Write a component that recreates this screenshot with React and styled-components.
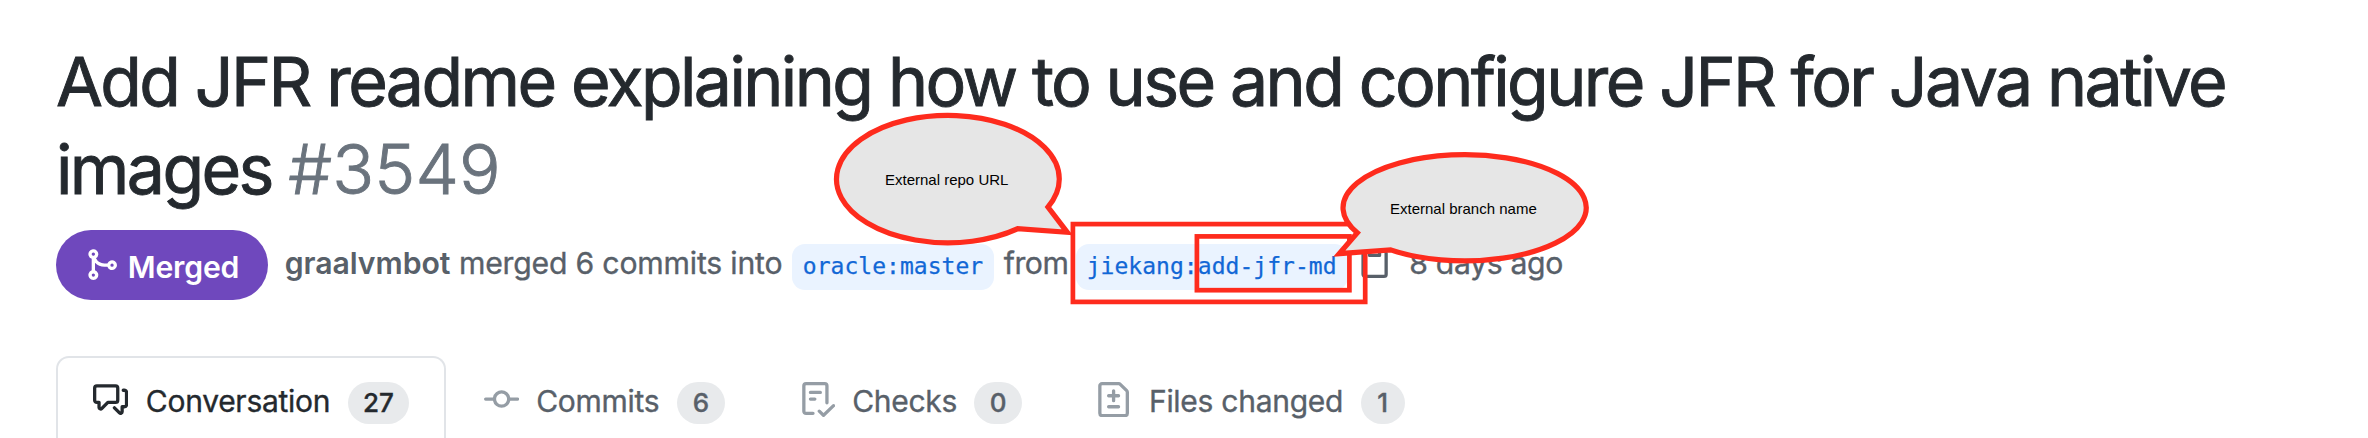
import React from "react";
import styled, { createGlobalStyle } from "styled-components";

const GlobalStyle = createGlobalStyle`
  *, *::before, *::after { box-sizing: border-box; }
  body {
    margin: 0;
    background: #ffffff;
    font-family: Inter, "Liberation Sans", sans-serif;
    color: #24292e;
    overflow: hidden;
  }
`;

const Page = styled.main`
  position: relative;
  display: flex;
  flex-direction: column;
  height: 438px;
  padding: 37px 56px 0;
  overflow: hidden;
`;

const Title = styled.h1`
  margin: 0;
  font-size: 68px;
  font-weight: 400;
  line-height: 88px;
  letter-spacing: -2.61px;
  -webkit-text-stroke: 0.9px currentColor;
`;

const Number = styled.span`
  color: #6a737d;
  font-size: 69.2px;
  font-weight: 300;
  letter-spacing: 0.1px;
  line-height: 1;
`;

const Meta = styled.div`
  display: flex;
  align-items: flex-start;
  flex: none;
  height: 70px;
  margin-top: 17px;
  color: #586069;
  font-size: 30.2px;
  line-height: 66px;
  letter-spacing: -0.2px;
  white-space: nowrap;
`;

const State = styled.span`
  display: flex;
  align-items: center;
  width: 212px;
  height: 70px;
  margin-right: 16.7px;
  padding: 0 28px;
  border-radius: 35px;
  background: #6f48bd;
  color: #ffffff;
  font-weight: 600;
  line-height: 38px;
`;

const StateLabel = styled.span`
  margin: 4px 0 0 8.6px;
`;

const Author = styled.strong`
  margin-right: 8.6px;
  font-weight: 600;
  letter-spacing: -0.05px;
`;

const Phrase = styled.span`
  margin-right: ${(p) => p.$after || 0}px;
  letter-spacing: ${(p) => p.$tracking || -0.2}px;
  -webkit-text-stroke: 0.35px currentColor;
`;

const Branch = styled.code`
  height: 46px;
  margin: 14px 9.6px 0 0;
  padding: 0 11px 2px;
  border-radius: 13px;
  background: #eaf3ff;
  color: #1167d6;
  font-family: "DejaVu Sans Mono", monospace;
  font-size: 23px;
  line-height: 44px;
  letter-spacing: 0.03px;
  -webkit-text-stroke: 0.25px currentColor;
`;

const Icon = styled.svg`
  flex: none;
  width: 35.2px;
  height: 35.2px;
  fill: currentColor;
`;

const CopyIcon = styled(Icon)`
  margin: 15px 17px 0 0;
`;

const Tabs = styled.nav`
  display: flex;
  flex: none;
  height: 100px;
  margin-top: 56px;
`;

const Tab = styled.a`
  display: flex;
  align-items: flex-start;
  padding: 22px 35.2px 0;
  border: 2px solid ${(p) => (p.$active ? "#e1e4e8" : "transparent")};
  border-bottom: 0;
  border-radius: 13px 13px 0 0;
  color: ${(p) => (p.$active ? "#24292e" : "#586069")};
  font-size: 30px;
  line-height: 42px;
  letter-spacing: -0.27px;
  white-space: nowrap;
  -webkit-text-stroke: 0.35px currentColor;

  ${Icon} {
    margin: 2px 17.4px 0 0;
    color: ${(p) => (p.$active ? "#24292e" : "#959da5")};
  }
`;

const Counter = styled.span`
  min-width: ${(p) => p.$width}px;
  height: 42px;
  margin: 2px 0 0 17.4px;
  border-radius: 21px;
  background: #e8eaec;
  font-size: 26px;
  font-weight: 500;
  letter-spacing: 0;
  text-align: center;
`;

const Annotations = styled.svg`
  position: absolute;
  left: 0;
  top: 0;
  width: 2368px;
  height: 438px;
  pointer-events: none;
`;

const Highlight = styled.rect`
  fill: none;
  stroke: #fe2b1d;
  stroke-width: 4.7px;
`;

const Bubble = styled.path`
  fill: #e6e6e6;
  stroke: #fe2b1d;
  stroke-width: 5.2px;
  stroke-linejoin: miter;
`;

const BubbleText = styled.text`
  fill: #000000;
  font-family: "Liberation Sans", Arial, sans-serif;
  font-size: 15px;
`;

const icons = {
  merge:
    "M5 3.254V3.25v.005a.75.75 0 110-.005v.004zm.45 1.9a2.25 2.25 0 10-1.95.218v5.256a2.25 2.25 0 101.5 0V7.123A5.735 5.735 0 009.25 9h1.378a2.25 2.25 0 100-1.5H9.25a4.25 4.25 0 01-3.8-2.346zM12.75 9a.75.75 0 100-1.5.75.75 0 000 1.5zm-8.5 4.5a.75.75 0 100-1.5.75.75 0 000 1.5z",
  copy:
    "M5.75 1a.75.75 0 00-.75.75v3c0 .414.336.75.75.75h4.5a.75.75 0 00.75-.75v-3a.75.75 0 00-.75-.75h-4.5zm.75 3V2.5h3V4h-3zm-2.874-.467a.75.75 0 00-.752-1.298A1.75 1.75 0 002 3.75v9.5c0 .966.784 1.75 1.75 1.75h8.5A1.75 1.75 0 0014 13.25v-9.5a1.75 1.75 0 00-.874-1.515.75.75 0 10-.752 1.298.25.25 0 01.126.217v9.5a.25.25 0 01-.25.25h-8.5a.25.25 0 01-.25-.25v-9.5a.25.25 0 01.126-.217z",
  conversation:
    "M1.5 2.75a.25.25 0 01.25-.25h8.5a.25.25 0 01.25.25v5.5a.25.25 0 01-.25.25h-3.5a.75.75 0 00-.53.22L3.5 11.44V9.25a.75.75 0 00-.75-.75h-1a.25.25 0 01-.25-.25v-5.5zM1.75 1A1.75 1.75 0 000 2.75v5.5C0 9.216.784 10 1.75 10H2v1.543a1.457 1.457 0 002.487 1.03L7.061 10h3.189A1.75 1.75 0 0012 8.25v-5.5A1.75 1.75 0 0010.25 1h-8.5zM14.5 4.75a.25.25 0 00-.25-.25h-.5a.75.75 0 110-1.5h.5c.966 0 1.75.784 1.75 1.75v5.5A1.75 1.75 0 0114.25 12H14v1.543a1.457 1.457 0 01-2.487 1.03L9.22 12.28a.75.75 0 111.06-1.06l2.22 2.22v-2.19a.75.75 0 01.75-.75h1a.25.25 0 00.25-.25v-5.5z",
  commit:
    "M10.5 7.75a2.5 2.5 0 11-5 0 2.5 2.5 0 015 0zm1.43.75a4.002 4.002 0 01-7.86 0H.75a.75.75 0 110-1.5h3.32a4.001 4.001 0 017.86 0h3.32a.75.75 0 110 1.5h-3.32z",
  checks:
    "M2.5 1.75a.25.25 0 01.25-.25h8.5a.25.25 0 01.25.25v7.736a.75.75 0 101.5 0V1.75A1.75 1.75 0 0011.25 0h-8.5A1.75 1.75 0 001 1.75v11.5c0 .966.784 1.75 1.75 1.75h3.17a.75.75 0 000-1.5H2.75a.25.25 0 01-.25-.25V1.75zM4.75 4a.75.75 0 000 1.5h4.5a.75.75 0 000-1.5h-4.5zM4 7.75A.75.75 0 014.75 7h2a.75.75 0 010 1.5h-2A.75.75 0 014 7.75zm11.774 3.537a.75.75 0 00-1.048-1.074L10.7 14.145 9.281 12.72a.75.75 0 00-1.062 1.058l1.943 1.95a.75.75 0 001.055.008l4.557-4.45z",
  files:
    "M2.75 1.5a.25.25 0 00-.25.25v12.5c0 .138.112.25.25.25h10.5a.25.25 0 00.25-.25V4.664a.25.25 0 00-.073-.177l-2.914-2.914a.25.25 0 00-.177-.073H2.75zM1 1.75C1 .784 1.784 0 2.75 0h7.586c.464 0 .909.184 1.237.513l2.914 2.914c.329.328.513.773.513 1.237v9.586A1.75 1.75 0 0113.25 16H2.75A1.75 1.75 0 011 14.25V1.75zm7 1.5a.75.75 0 01.75.75v1.5h1.5a.75.75 0 010 1.5h-1.5v1.5a.75.75 0 01-1.5 0V7h-1.5a.75.75 0 010-1.5h1.5V4A.75.75 0 018 3.25zm-3 8a.75.75 0 01.75-.75h4.5a.75.75 0 010 1.5h-4.5a.75.75 0 01-.75-.75z",
};

const tabs = [
  { icon: "conversation", label: "Conversation", count: 27, width: 61.6, active: true },
  { icon: "commit", label: "Commits", count: 6, width: 48.4 },
  { icon: "checks", label: "Checks", count: 0, width: 47.5 },
  { icon: "files", label: "Files changed", count: 1, width: 44 },
];

function Octicon({ name, as: Component = Icon }) {
  return (
    <Component viewBox="0 0 16 16" aria-hidden="true">
      <path fillRule="evenodd" d={icons[name]} />
    </Component>
  );
}

export default function App() {
  return (
    <>
      <GlobalStyle />
      <Page>
        <Title>
          Add JFR readme explaining how to use and configure JFR for Java native images{" "}
          <Number>#3549</Number>
        </Title>
        <Meta>
          <State>
            <Octicon name="merge" />
            <StateLabel>Merged</StateLabel>
          </State>
          <Author>graalvmbot</Author>
          <Phrase $after={9.4}>merged 6 commits into</Phrase>
          <Branch>oracle:master</Branch>
          <Phrase $after={7.4} $tracking={-0.5}>from</Phrase>
          <Branch>jiekang:add-jfr-md</Branch>
          <Octicon name="copy" as={CopyIcon} />
          <Phrase $tracking={-0.35}>8 days ago</Phrase>
        </Meta>
        <Tabs>
          {tabs.map((tab) => (
            <Tab key={tab.label} $active={tab.active}>
              <Octicon name={tab.icon} />
              {tab.label}
              <Counter $width={tab.width}>{tab.count}</Counter>
            </Tab>
          ))}
        </Tabs>
        <Annotations viewBox="0 0 2368 438">
          <Highlight x="1072.9" y="224.1" width="292.3" height="77.8" />
          <Highlight x="1196.9" y="236.4" width="152.5" height="53.8" />
          <Bubble d="M1048 207A111.4 63.7 0 1 0 1017.7 228.7L1067.3 232.3Z" />
          <Bubble d="M1357.3 232.7A121.6 53.1 0 1 1 1390.7 249.9L1339.3 253.6Z" />
          <BubbleText x="885" y="185">External repo URL</BubbleText>
          <BubbleText x="1390" y="214">External branch name</BubbleText>
        </Annotations>
      </Page>
    </>
  );
}
